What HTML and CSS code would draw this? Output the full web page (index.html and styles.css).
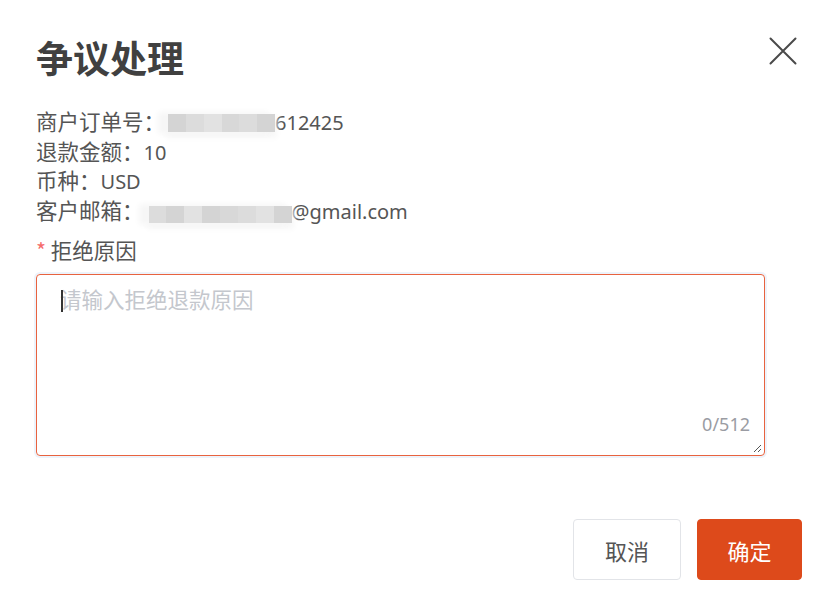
FILE: index.html
```html
<!DOCTYPE html>
<html lang="zh-CN">
<head>
<meta charset="utf-8">
<title>争议处理</title>
<link rel="stylesheet" href="styles.css">
</head>
<body>
<div class="dialog">
  <div class="header">
    <h1 class="title">争议处理</h1>
    <button class="close" aria-label="关闭">
      <svg width="28" height="28" viewBox="0 0 28 28"><path d="M1.5 1.5 L26.5 26.5 M26.5 1.5 L1.5 26.5" stroke="#4a4a4a" stroke-width="2" fill="none" stroke-linecap="round"/></svg>
    </button>
  </div>
  <div class="info">
    <div class="line">商户订单号：<span class="mask mask-order"><i class="m1"></i><i class="m2"></i><i class="m3"></i><i class="m4"></i><i class="m2"></i><i class="m1"></i></span><span class="latin">612425</span></div>
    <div class="line">退款金额：<span class="latin">10</span></div>
    <div class="line">币种：<span class="latin">USD</span></div>
    <div class="line">客户邮箱：<span class="mask mask-email"><i class="m2"></i><i class="m1"></i><i class="m3"></i><i class="m1"></i><i class="m4"></i><i class="m2"></i><i class="m3"></i><i class="m1"></i></span><span class="latin">@gmail.com</span></div>
  </div>
  <div class="field-label"><span class="req">*</span> 拒绝原因</div>
  <div class="textarea">
    <span class="caret"></span>
    <span class="placeholder">请输入拒绝退款原因</span>
    <span class="count">0/512</span>
    <svg class="grip" width="10" height="10" viewBox="0 0 10 10"><path d="M9 2 L2 9 M9 6 L6 9" stroke="#555" stroke-width="1" fill="none"/></svg>
  </div>
  <div class="footer">
    <button class="btn btn-cancel">取消</button>
    <button class="btn btn-ok">确定</button>
  </div>
</div>
</body>
</html>
```
FILE: styles.css
```css
* { box-sizing: border-box; }
body {
  margin: 0;
  background: #fff;
  font-family: "Noto Sans CJK SC", "Noto Sans", sans-serif;
  color: #555;
}
.dialog {
  padding: 37px 29px 0 36px;
}
.header {
  display: flex;
  justify-content: space-between;
  align-items: flex-start;
}
.title {
  margin: 0;
  font-size: 37px;
  line-height: 40px;
  font-weight: 700;
  color: #404040;
}
.close {
  border: 0;
  background: none;
  padding: 0;
  margin: 0 5px 0 0;
  width: 28px;
  height: 28px;
  display: flex;
}
.info {
  margin-top: 29px;
  font-size: 21.5px;
  line-height: 29.5px;
  color: #555;
}
.line { white-space: nowrap; height: 29.5px; }
.latin {
  font-family: "Noto Sans", sans-serif;
  font-size: 20px;
  line-height: 1;
}
.mask {
  display: inline-flex;
  vertical-align: middle;
  height: 18px;
  position: relative;
  top: -1px;
  box-shadow: -8px 0 6px 2px #f6f6f6, 0 4px 6px 2px #f7f7f7;
}
.mask i { display: block; flex: 1; height: 100%; }
.mask .m1 { background: #d4d4d4; }
.mask .m2 { background: #dcdcdc; }
.mask .m3 { background: #e2e2e2; }
.mask .m4 { background: #d8d8d8; }
.mask-order { width: 107px; margin-left: 3px; }
.mask-email { width: 143px; margin-left: 5px; height: 17px; top: 2px; }
.field-label {
  margin-top: 11px;
  font-size: 21.5px;
  line-height: 30px;
  color: #555;
}
.req { color: #f56c6c; }
.textarea {
  position: relative;
  margin-top: 9px;
  width: 729px;
  height: 182px;
  border: 1px solid #e8633f;
  border-radius: 4px;
  box-shadow: 0 0 0 2px #edf3fb;
  padding: 9px 23px;
}
.placeholder {
  display: block;
  font-size: 21.5px;
  line-height: 30px;
  color: #c4c7cd;
}
.caret {
  position: absolute;
  left: 24px;
  top: 15px;
  width: 1.5px;
  height: 22px;
  background: #333;
}
.count {
  position: absolute;
  right: 14px;
  bottom: 19px;
  font-family: "Noto Sans", sans-serif;
  font-size: 18px;
  line-height: 24px;
  color: #9a9ca3;
}
.grip {
  position: absolute;
  right: 2px;
  bottom: 2px;
}
.footer {
  margin-top: 63px;
  display: flex;
  justify-content: flex-end;
  gap: 16px;
}
.btn {
  height: 61px;
  border-radius: 4px;
  font-family: "Noto Sans CJK SC", sans-serif;
  font-size: 22px;
  cursor: pointer;
}
.btn-cancel {
  width: 108px;
  background: #fff;
  border: 1px solid #e2e4e8;
  color: #555;
}
.btn-ok {
  width: 105px;
  background: #dd4a1b;
  border: 1px solid #dd4a1b;
  color: #fff;
}
```
